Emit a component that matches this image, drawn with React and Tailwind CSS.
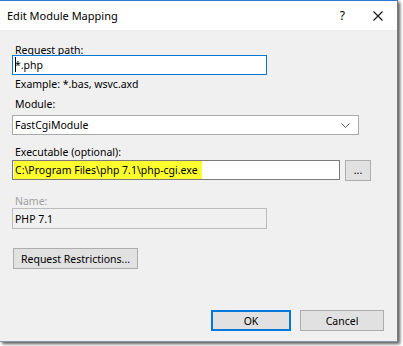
export default function App() {
    const font = { fontFamily: '"Noto Sans", "Segoe UI", sans-serif' };

    return (
        <div className="w-[403px] h-[346px] bg-white overflow-hidden" style={font}>
            {/* Dialog window */}
            <div className="w-[398px] h-[342px] flex flex-col bg-[#f0f0f0] border-t border-t-[#2b79d1] border-r border-r-[#7a7a7a] border-b border-b-[#8a95a5] shadow-[2px_2px_3px_rgba(0,0,0,0.65)] text-[10.5px] text-black whitespace-nowrap">
                {/* Title bar */}
                <div className="h-[29px] shrink-0 bg-white flex items-center pl-[7px]">
                    <span className="leading-[14px] text-[11px]">Edit Module Mapping</span>
                    <span className="ml-auto mr-[28px] text-[12px] leading-[14px]">?</span>
                    <svg width="10" height="10" viewBox="0 0 10 10" className="mr-[14px]">
                        <path d="M0.5 0.5 L9.5 9.5 M9.5 0.5 L0.5 9.5" stroke="#111" strokeWidth="1.1" />
                    </svg>
                </div>

                <div className="flex flex-col pl-[12px] pr-[12px]">
                    {/* Request path */}
                    <div className="mt-[14px] leading-[12px] h-[12px] pl-[3px]">Request path:</div>
                    <div className="mt-[-1px] w-[255px] h-[20px] border border-[#0078d7] bg-white flex items-center pl-[2px]">
                        <span className="relative leading-[14px]">
                            <span className="absolute left-[0px] -top-[1px] w-[1px] h-[15px] bg-black" />
                            *.php
                        </span>
                    </div>
                    <div className="mt-[3px] leading-[12px] h-[12px] pl-[3px]">Example: *.bas, wsvc.axd</div>

                    {/* Module */}
                    <div className="mt-[8px] leading-[12px] h-[12px] pl-[3px]">Module:</div>
                    <div className="mt-[5px] w-[347px] h-[20px] border border-[#a9a9a9] bg-white flex items-center pl-[2px] pr-[8px]">
                        <span className="leading-[14px]">FastCgiModule</span>
                        <svg width="9" height="5" viewBox="0 0 9 5" className="ml-auto">
                            <polyline points="0.5,0.5 4.5,4.5 8.5,0.5" fill="none" stroke="#555" strokeWidth="1" />
                        </svg>
                    </div>

                    {/* Executable */}
                    <div className="mt-[11px] leading-[12px] h-[12px] pl-[3px]">Executable (optional):</div>
                    <div className="mt-[2px] flex gap-[5px]">
                        <div className="w-[328px] h-[20px] border border-[#7a7a7a] bg-white flex items-center pl-[1px]">
                            <span className="inline-block h-[18px] leading-[18px] bg-[#ffff2e] pl-[1px] pr-[4px]">
                                C:\Program Files\php 7.1\php-cgi.exe
                            </span>
                        </div>
                        <button className="w-[26px] h-[21px] border border-[#adadad] bg-[#e1e1e1] flex items-center justify-center leading-[12px] pb-[2px]">
                            ...
                        </button>
                    </div>

                    {/* Name */}
                    <div className="mt-[14px] leading-[12px] h-[12px] pl-[3px] text-[#a0a0a0]">Name:</div>
                    <div className="mt-[1px] w-[255px] h-[21px] border border-[#bcbcbc] bg-[#f0f0f0] flex items-center pl-[2px]">
                        <span className="leading-[14px]">PHP 7.1</span>
                    </div>

                    {/* Request Restrictions */}
                    <button className="mt-[19px] ml-[1px] w-[125px] h-[21px] border border-[#adadad] bg-[#e1e1e1] flex items-center justify-center leading-[14px]">
                        Request Restrictions...
                    </button>

                    {/* OK / Cancel */}
                    <div className="mt-[41px] flex justify-end gap-[9px] pr-[1px]">
                        <button className="w-[80px] h-[21px] border border-[#0078d7] shadow-[inset_0_0_0_1px_#0078d7] bg-[#e1e1e1] flex items-center justify-center leading-[14px]">
                            OK
                        </button>
                        <button className="w-[84px] h-[21px] border border-[#adadad] bg-[#e1e1e1] flex items-center justify-center leading-[14px]">
                            Cancel
                        </button>
                    </div>
                </div>
            </div>
        </div>
    );
}
